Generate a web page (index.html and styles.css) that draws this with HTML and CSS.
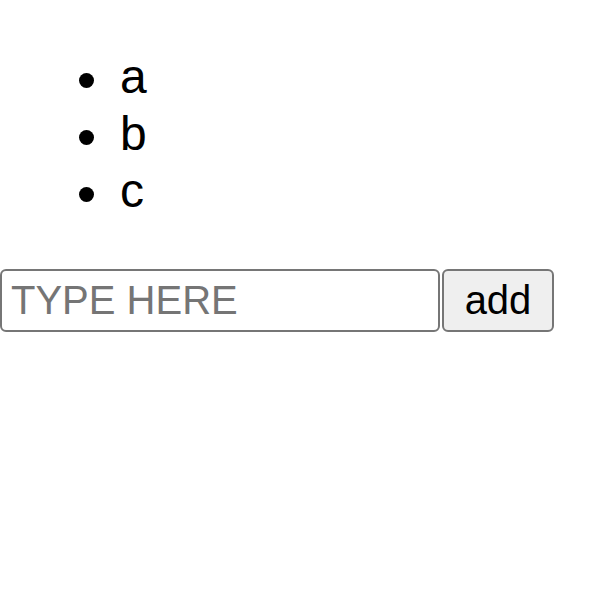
FILE: index.html
```html
<!DOCTYPE html>
<html>
<head>
<meta charset="utf-8">
<link rel="stylesheet" href="styles.css">
</head>
<body>
<ul class="list">
  <li class="item">a</li>
  <li class="item">b</li>
  <li class="item">c</li>
</ul>
<div class="row"><input class="field" type="text" placeholder="TYPE HERE"><button class="add">add</button></div>
</body>
</html>
```

FILE: styles.css
```css
html, body {
  margin: 0;
  padding: 0;
  background: #fff;
}
body {
  font-family: "Liberation Sans", Arial, sans-serif;
  color: #000;
}
.list {
  margin: 48px 0 50px 0;
  padding-left: 120px;
  font-size: 48px;
  line-height: 57px;
  list-style: none;
}
.item::before {
  content: "";
  display: inline-block;
  width: 15px;
  height: 15px;
  border-radius: 50%;
  background: #000;
  margin-left: -41px;
  margin-right: 26px;
  vertical-align: 5px;
}
.row {
  display: flex;
  align-items: stretch;
  gap: 2px;
}
.field {
  box-sizing: border-box;
  width: 440px;
  height: 63px;
  margin: 0;
  padding: 0 9px;
  border: 2px solid #767676;
  border-radius: 6px;
  font-family: "Liberation Sans", Arial, sans-serif;
  font-size: 40px;
  color: #000;
  background: #fff;
}
.field::placeholder {
  color: #757575;
}
.add {
  box-sizing: border-box;
  width: 112px;
  height: 63px;
  margin: 0;
  padding: 0 15px;
  border: 2px solid #767676;
  border-radius: 6px;
  background: #efefef;
  font-family: "Liberation Sans", Arial, sans-serif;
  font-size: 40px;
  color: #000;
}
```
